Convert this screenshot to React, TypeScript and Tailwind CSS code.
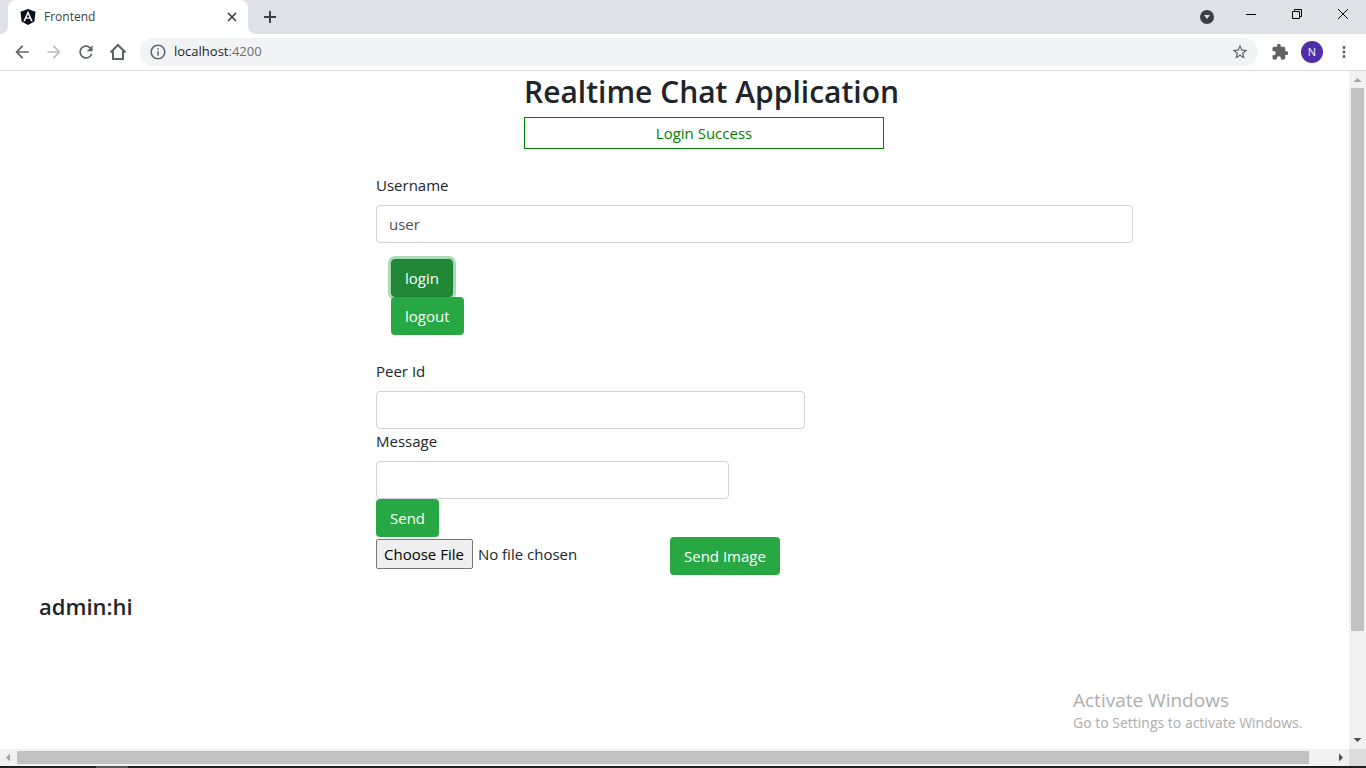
import { useState } from "react";
import type { ReactNode } from "react";
import {
  MdArrowBack,
  MdArrowForward,
  MdExtension,
  MdInfoOutline,
  MdMoreVert,
  MdRefresh,
  MdStarBorder,
} from "react-icons/md";

function AngularLogo() {
  return (
    <svg viewBox="0 0 24 24" className="size-4 shrink-0" aria-hidden="true">
      <path
        fill="#0b0f19"
        d="M9.931 12.645h4.138l-2.07-4.908m0-7.737L.68 3.982l1.726 14.771L12 24l9.596-5.242L23.32 3.984 11.999.001zm7.064 18.31h-2.638l-1.422-3.503H8.996l-1.422 3.504h-2.64L12 2.65z"
      />
    </svg>
  );
}

function TabCurve({ flip = false }: { flip?: boolean }) {
  return (
    <svg viewBox="0 0 8 8" className={flip ? "size-2 self-end -scale-x-100" : "size-2 self-end"} aria-hidden="true">
      <path fill="#fff" d="M8 0v8H0a8 8 0 0 0 8-8z" />
    </svg>
  );
}

function TabStrip() {
  return (
    <div className="flex h-[34px] shrink-0 bg-[#dee1e6]">
      <TabCurve />
      <div className="flex w-60 items-center rounded-t-lg bg-white pr-2 pl-3">
        <AngularLogo />
        <span className="ml-2 flex-1 text-[12px] text-[#3c4043]">Frontend</span>
        <button type="button" aria-label="Close tab" className="flex size-4 items-center justify-center">
          <svg viewBox="0 0 16 16" className="size-4" stroke="#3c4043" strokeWidth="1.7">
            <path d="M4 4l8 8M12 4l-8 8" />
          </svg>
        </button>
      </div>
      <TabCurve flip />
      <button type="button" aria-label="New tab" className="flex w-7 items-center justify-center">
        <svg viewBox="0 0 16 16" className="size-4" stroke="#3c4043" strokeWidth="2">
          <path d="M8 2v12M2 8h12" />
        </svg>
      </button>
      <div className="ml-auto flex">
        <button type="button" aria-label="Search tabs" className="flex w-[42px] items-center justify-center">
          <svg viewBox="0 0 14 14" className="size-[14px]">
            <circle cx="7" cy="7" r="7" fill="#3c4043" />
            <path d="M4 5h6L7 9z" fill="#dee1e6" />
          </svg>
        </button>
        <button type="button" aria-label="Minimize" className="flex h-7 w-[46px] items-center justify-center">
          <svg viewBox="0 0 10 10" className="size-[10px]">
            <path d="M0 5h10v1H0z" />
          </svg>
        </button>
        <button type="button" aria-label="Restore" className="flex h-7 w-[46px] items-center justify-center">
          <svg viewBox="0 0 10 10" className="size-[10px]" fill="none" stroke="#000">
            <path d="M.5 2.5h7v7h-7zM2.500 2.500V.5h7v7h-2" />
          </svg>
        </button>
        <button type="button" aria-label="Close" className="flex h-7 w-[46px] items-center justify-center">
          <svg viewBox="0 0 10 10" className="size-[10px]" stroke="#000">
            <path d="M0 0l10 10M10 0L0 10" />
          </svg>
        </button>
      </div>
    </div>
  );
}

function ToolButton({ label, children }: { label: string; children: ReactNode }) {
  return (
    <button type="button" aria-label={label} className="flex w-8 items-center justify-center text-[#5f6368]">
      {children}
    </button>
  );
}

function Toolbar() {
  return (
    <div className="flex h-[37px] shrink-0 items-center border-b border-[#d9dbdf] bg-white px-[6px]">
      <ToolButton label="Back">
        <MdArrowBack className="size-5" />
      </ToolButton>
      <button type="button" aria-label="Forward" disabled className="flex w-8 items-center justify-center text-[#babcbe]">
        <MdArrowForward className="size-5" />
      </button>
      <ToolButton label="Reload">
        <MdRefresh className="size-5" />
      </ToolButton>
      <ToolButton label="Home">
        <svg viewBox="0 0 18 18" className="size-[18px]" fill="none" stroke="currentColor" strokeWidth="2">
          <path d="M1.500 9.500L9 2l7.500 7.500M4 8v8h10V8" />
        </svg>
      </ToolButton>
      <div className="ml-[6px] flex h-7 flex-1 items-center rounded-full bg-[#f1f3f4] px-[9px]">
        <MdInfoOutline className="size-[18px] text-[#5f6368]" />
        <span className="ml-[7px] flex-1 text-[13px] text-[#202124]">
          localhost<span className="text-[#6a6e73]">:4200</span>
        </span>
        <button type="button" aria-label="Bookmark" className="text-[#5f6368]">
          <MdStarBorder className="size-[18px]" />
        </button>
      </div>
      <div className="ml-[6px] flex items-center">
        <ToolButton label="Extensions">
          <MdExtension className="size-[18px]" />
        </ToolButton>
        <button type="button" aria-label="Profile" className="mx-[5px] flex size-[22px] items-center justify-center rounded-full bg-[#512da8] text-[11px] text-white">
          N
        </button>
        <ToolButton label="Menu">
          <MdMoreVert className="size-[18px]" />
        </ToolButton>
      </div>
    </div>
  );
}

const field =
  "block h-[38px] rounded-sm border border-[#ced4da] bg-white px-3 text-[15px] text-[#495057] outline-none";
const green = "h-[38px] rounded-sm bg-[#28a745] px-[14px] text-[15px] text-white";

function ChatPage() {
  const [user, setUser] = useState("user");
  const [peer, setPeer] = useState("");
  const [message, setMessage] = useState("");
  return (
    <main className="min-w-0 flex-1 overflow-hidden text-[15px] leading-6 text-[#212529]">
      <header className="pl-[524px]">
        <h1 className="mb-1 text-[30px] leading-[42px] font-semibold whitespace-nowrap">Realtime Chat Application</h1>
        <p className="flex h-8 w-[360px] items-center justify-center border border-[#008000] text-[#008000]">Login Success</p>
      </header>
      <form className="pt-6 pr-[216px] pl-[376px]" onSubmit={(e) => e.preventDefault()}>
        <label htmlFor="username" className="mb-2 block">
          Username
        </label>
        <input id="username" className={`${field} w-full`} value={user} onChange={(e) => setUser(e.target.value)} />
        <div className="mt-4 mb-6 flex flex-col items-start pl-[15px]">
          <button type="submit" className="h-[38px] rounded-sm border border-[#1e7e34] bg-[#218838] px-[13px] text-[15px] text-white ring-3 ring-[#28a745]/40">
            login
          </button>
          <button type="button" className={`${green} relative`}>
            logout
          </button>
        </div>
        <label htmlFor="peer" className="mb-2 block">
          Peer Id
        </label>
        <input id="peer" className={`${field} w-[429px]`} value={peer} onChange={(e) => setPeer(e.target.value)} />
        <label htmlFor="message" className="mb-2 block">
          Message
        </label>
        <input id="message" className={`${field} w-[353px]`} value={message} onChange={(e) => setMessage(e.target.value)} />
        <button type="button" className={`${green} block`}>
          Send
        </button>
        <div className="flex items-start">
          <input
            type="file"
            aria-label="Image file"
            className="mt-[2px] w-[294px] text-[15px] leading-6 file:mr-[5px] file:h-[30px] file:rounded-xs file:border file:border-solid file:border-[#767676] file:bg-[#efefef] file:pr-2 file:pl-[7px] file:text-black"
          />
          <button type="button" className={green}>
            Send Image
          </button>
        </div>
      </form>
      <h4 className="mt-4 pl-[39px] text-[22px] leading-[30px] font-semibold">admin:hi</h4>
    </main>
  );
}

export default function App() {
  return (
    <div className="relative flex h-screen flex-col overflow-hidden bg-white font-['Open_Sans','Noto_Sans',sans-serif]">
      <TabStrip />
      <Toolbar />
      <div className="flex min-h-0 flex-1">
        <ChatPage />
        <div className="flex w-[17px] flex-col items-center bg-[#f1f1f1]">
          <svg viewBox="0 0 17 17" className="size-[17px] shrink-0" aria-hidden="true">
            <path d="M8.500 7L12.500 11h-8z" fill="#a3a3a3" />
          </svg>
          <div className="w-[13px] flex-[543] bg-[#c1c1c1]" />
          <div className="flex-[101]" />
          <svg viewBox="0 0 17 17" className="size-[17px] shrink-0" aria-hidden="true">
            <path d="M4.500 6h8l-4 4z" fill="#505050" />
          </svg>
        </div>
      </div>
      <div className="flex h-[17px] shrink-0 items-center bg-[#f1f1f1]">
        <svg viewBox="0 0 17 17" className="size-[17px] shrink-0" aria-hidden="true">
          <path d="M10 4.500v8l-4-4z" fill="#a3a3a3" />
        </svg>
        <div className="h-[13px] flex-[1292] bg-[#c1c1c1]" />
        <div className="flex-[23]" />
        <svg viewBox="0 0 17 17" className="size-[17px] shrink-0" aria-hidden="true">
          <path d="M7 4.500l4 4-4 4z" fill="#505050" />
        </svg>
        <div className="h-full w-[17px] bg-[#dcdcdc]" />
      </div>
      <div className="flex h-[2px] shrink-0 bg-[#231f20] pl-24">
        <div className="w-8 bg-[#5a5657]" />
      </div>
      <div className="pointer-events-none absolute right-[57px] bottom-[35px] w-[236px] text-[#adadad]">
        <p className="text-[19px] leading-[26px]">Activate Windows</p>
        <p className="text-[14px] leading-5">Go to Settings to activate Windows.</p>
      </div>
    </div>
  );
}
